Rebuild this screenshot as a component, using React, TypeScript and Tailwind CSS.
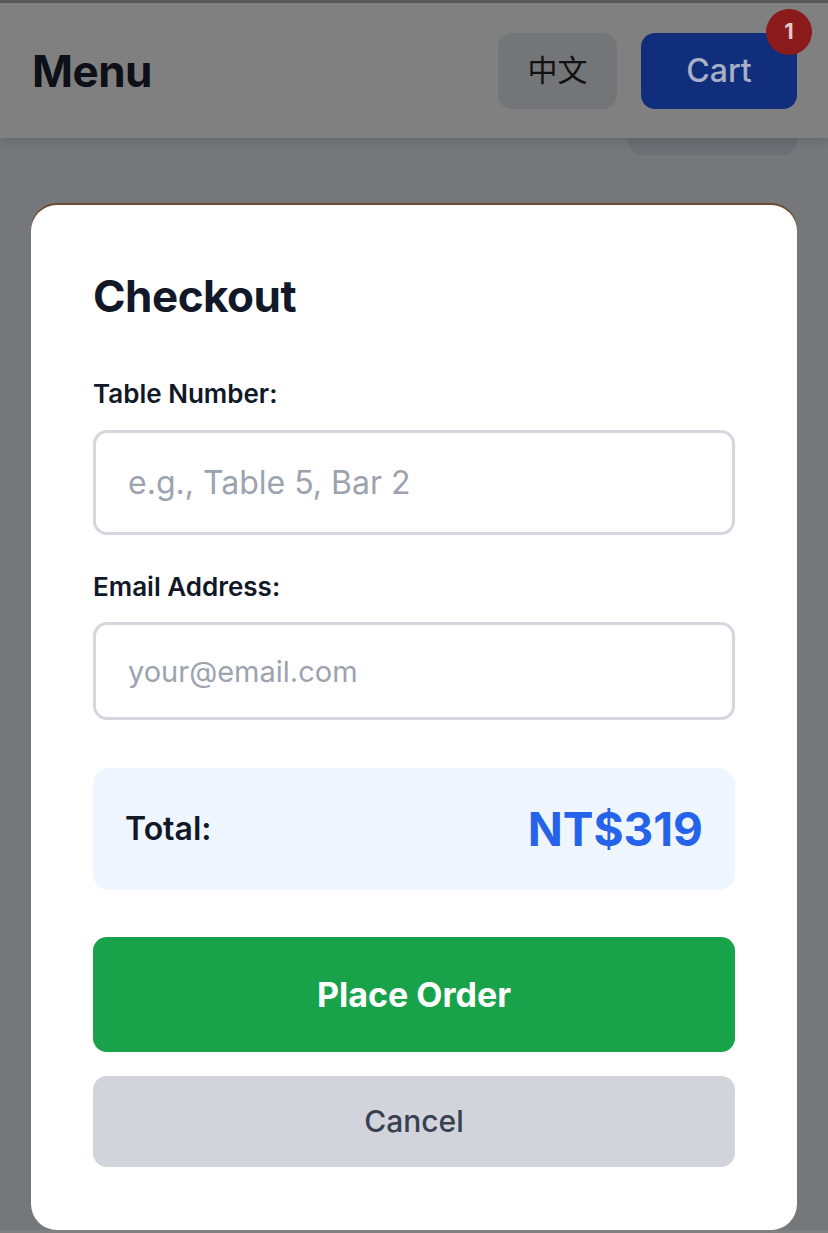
import React from "react";

export default function App() {
  return (
    <div
      className="flex h-[1233px] w-full flex-col overflow-hidden bg-[#76777b]"
      style={{ fontFamily: "Inter, 'Noto Sans CJK SC', sans-serif" }}
    >
      <div className="h-[3px] bg-[#5a5a5a]" />
      <header className="relative z-10 flex h-[135px] items-center justify-between bg-[#808080] pl-[32px] pr-[31px] shadow-[0_4px_8px_rgba(0,0,0,0.12)]">
        <h1 className="text-[44px] font-bold leading-none tracking-[-0.5px] text-[#0d1017]">Menu</h1>
        <div className="flex items-center gap-[24px]">
          <button className="flex h-[76px] w-[119px] items-center justify-center rounded-[14px] bg-[#747578] text-[30px] text-[#111111]">
            中文
          </button>
          <button className="relative flex h-[76px] w-[156px] items-center justify-center rounded-[14px] bg-[#112e7c] text-[32px] font-medium text-[#a7b0c6]">
            Cart
            <span className="absolute -right-[15px] -top-[24px] flex h-[46px] w-[46px] items-center justify-center rounded-full bg-[#8b1a1a] text-[22px] font-bold text-[#e6c8c8]">
              1
            </span>
          </button>
        </div>
      </header>
      <div className="mr-[31px] h-[17px] w-[169px] self-end rounded-b-[14px] bg-[#6e6f74]" />
      <div className="mx-[31px] mt-[50px] flex h-[1025px] flex-col rounded-[26px] bg-white px-[62px] pt-[65px] shadow-[0_-2px_0_#6b4b2e]">
        <h2 className="text-[44px] font-bold leading-[53px] tracking-[-0.5px] text-[#111827]">Checkout</h2>
        <label className="mt-[56px] text-[26px] font-semibold leading-[30px] text-[#111827]">Table Number:</label>
        <input
          className="mt-[21px] h-[105px] w-full rounded-[14px] border-[3px] border-[#d6d7de] bg-white px-[32px] text-[32px] text-[#111827] outline-none placeholder:text-[#9ca3af]"
          placeholder="e.g., Table 5, Bar 2"
        />
        <label className="mt-[37px] text-[26px] font-semibold leading-[30px] text-[#111827]">Email Address:</label>
        <input
          className="mt-[20px] h-[98px] w-full rounded-[14px] border-[3px] border-[#d6d7de] bg-white px-[32px] text-[29px] text-[#111827] outline-none placeholder:text-[#9ca3af]"
          placeholder="your@email.com"
        />
        <div className="mt-[48px] flex h-[122px] items-center justify-between rounded-[16px] bg-[#eff6ff] px-[32px]">
          <span className="text-[32px] font-semibold text-[#111827]">Total:</span>
          <span className="text-[46px] font-bold text-[#2563eb]">NT$319</span>
        </div>
        <button className="mt-[47px] flex h-[115px] items-center justify-center rounded-[14px] bg-[#18a34a] text-[34px] font-bold text-white">
          Place Order
        </button>
        <button className="mt-[24px] flex h-[91px] items-center justify-center rounded-[14px] bg-[#d1d5db] text-[30px] font-medium text-[#374151]">
          Cancel
        </button>
      </div>
      <div className="flex-1 bg-[#808080]" />
    </div>
  );
}
